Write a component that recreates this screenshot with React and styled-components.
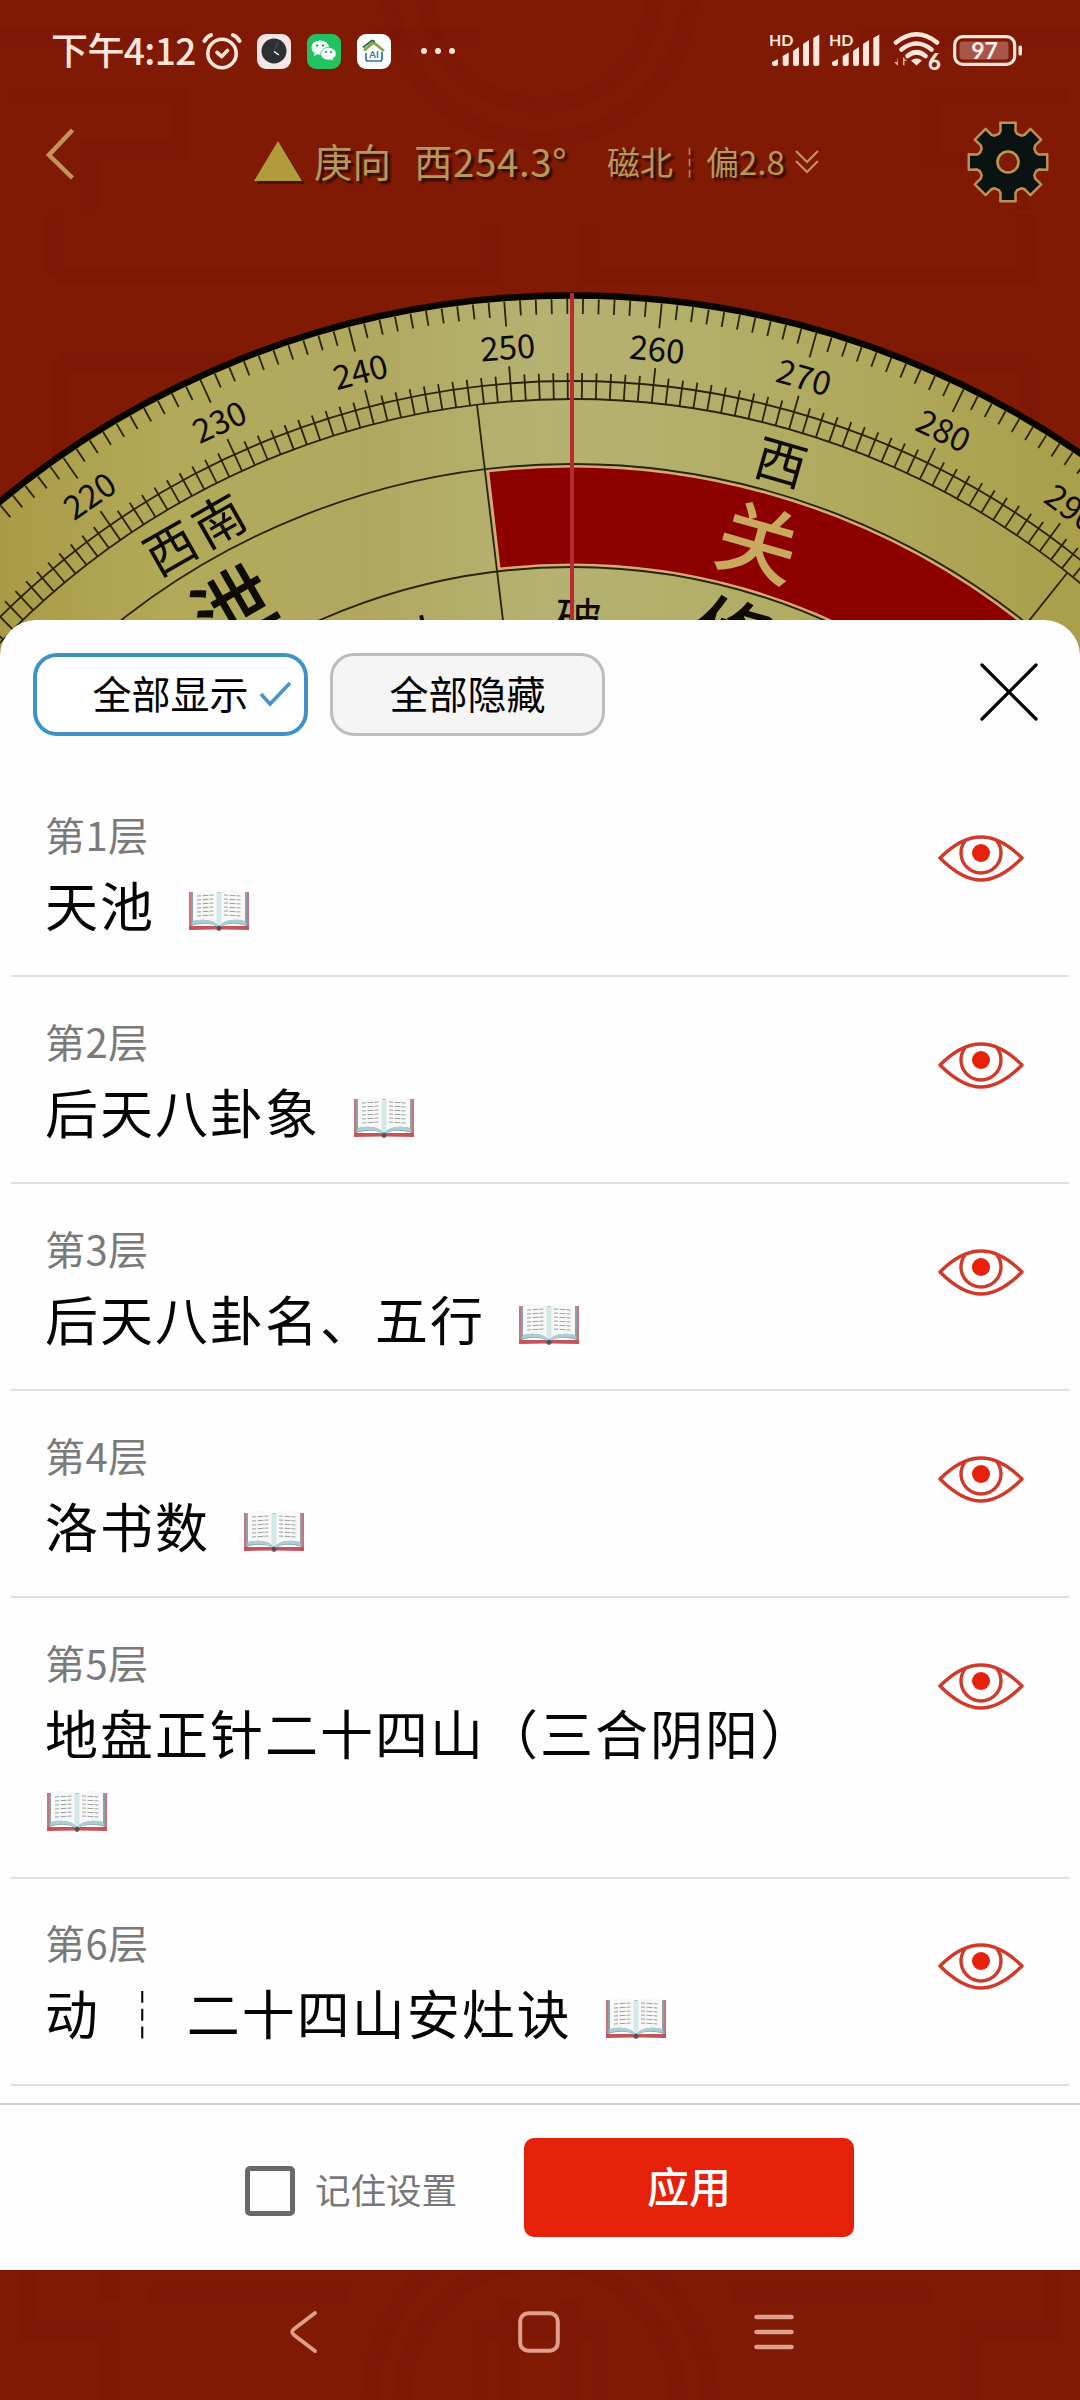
import React from "react";
import styled, { createGlobalStyle, css } from "styled-components";

const cjk = '"Noto Sans CJK SC", "Noto Sans", sans-serif';

const GlobalStyle = createGlobalStyle`
  * { box-sizing: border-box; }
  body { margin: 0; background: #801a04; font-family: ${cjk}; }
  svg { display: block; flex: none; }
`;

const Screen = styled.div`
  position: relative;
  display: flex;
  flex-direction: column;
  width: 1080px;
  height: 2400px;
  overflow: hidden;
  background: #801a04;
`;

const Backdrop = styled.svg`
  position: absolute;
  inset: 0;
`;

/* ---------- status bar ---------- */

const StatusBar = styled.header`
  position: relative;
  display: flex;
  justify-content: space-between;
  height: 102px;
  padding: 0 57px 0 51px;
  color: #ffe6dc;
`;

const StatusGroup = styled.div`
  display: flex;
  align-items: center;
`;

const Clock = styled.span`
  width: 151px;
  padding-bottom: 4px;
  font-size: 37px;
  font-weight: 500;
  line-height: 50px;
  letter-spacing: -0.6px;
  white-space: nowrap;
`;

const AppTile = styled.span`
  display: flex;
  align-items: center;
  justify-content: center;
  width: 34px;
  height: 35px;
  margin-left: 16px;
  border-radius: 9px;
  background: ${(p) => p.$bg};
`;

const MoreDots = styled.span`
  display: flex;
  gap: 8px;
  margin-left: 30px;
  i { width: 6px; height: 6px; border-radius: 50%; background: #ffe6dc; }
`;

/* ---------- compass header ---------- */

const Header = styled.div`
  position: relative;
  display: flex;
  align-items: center;
  height: 120px;
  padding: 0 30px 0 44px;
  color: #b5985a;
  white-space: nowrap;
`;

const BackSlot = styled.div`
  padding-bottom: 16px;
`;

const Readout = styled.div`
  display: flex;
  align-items: center;
  margin-left: 178px;
  text-shadow: 3px 3px 2px rgba(30, 8, 0, 0.85);
`;

const Facing = styled.span`
  width: 100px;
  padding-bottom: 4px;
  font-size: 38.5px;
  line-height: 50px;
`;

const Bearing = styled.span`
  width: 193px;
  padding-bottom: 4px;
  font-size: 38.5px;
  line-height: 50px;
  letter-spacing: 0.6px;
`;

const Declination = styled.span`
  width: 188px;
  padding-bottom: 2px;
  font-size: 33px;
  line-height: 50px;
`;

const HeaderSpacer = styled.div`flex: 1;`;

const DialSlot = styled.div`
  position: relative;
  height: 434px;
`;

/* ---------- sheet ---------- */

const Sheet = styled.section`
  position: relative;
  display: flex;
  flex-direction: column;
  height: 1650px;
  margin-top: -36px;
  border-radius: 36px 36px 0 0;
  background: #fefefe;
`;

const SheetBar = styled.div`
  display: flex;
  align-items: center;
  height: 149px;
  padding: 0 42px 0 33px;
`;

const CloseSlot = styled.div`
  padding-bottom: 6px;
`;

const Toggle = styled.button`
  display: flex;
  align-items: center;
  justify-content: center;
  width: 275px;
  height: 83px;
  margin-right: 22px;
  padding: 0 0 6px;
  border-radius: 24px;
  font-family: inherit;
  font-size: 39px;
  line-height: 50px;
  color: #000;
  ${(p) =>
    p.$active
      ? css`border: 4px solid #3f92c6; background: #fff; svg { margin: 3px -44px 0 9px; }`
      : css`border: 3px solid #bdbdbd; background: #f5f5f5;`}
`;

const LayerList = styled.ul`
  flex: 1;
  margin: 0;
  padding: 1px 11px 0;
  list-style: none;
  overflow: hidden;
`;

const LayerRow = styled.li`
  display: flex;
  justify-content: space-between;
  padding: 38.5px 45px 34px 34px;
  border-bottom: 2px solid #e0e0e0;
`;

const LayerText = styled.div`
  width: 790px;
`;

const LayerIndex = styled.div`
  margin-bottom: 9px;
  font-size: 40px;
  line-height: 50px;
  letter-spacing: 0.4px;
  color: #7a7a7a;
`;

const LayerName = styled.div`
  font-size: 53px;
  line-height: 73.5px;
  letter-spacing: 2px;
  word-spacing: 2px;
  white-space: pre-wrap;
  color: #050505;
`;

const BookSlot = styled.span`
  display: inline-block;
  width: 62px;
  height: 42px;
  margin-left: 1px;
  vertical-align: -4px;
`;

const EyeSlot = styled.div`
  padding-top: 24px;
`;

const Footer = styled.footer`
  display: flex;
  align-items: center;
  height: 167px;
  padding: 0 0 0 245px;
  border-top: 2px solid #d4d4d4;
`;

const Checkbox = styled.span`
  width: 50px;
  height: 50px;
  margin-top: 6px;
  border: 5px solid #696969;
  border-radius: 5px;
`;

const Remember = styled.span`
  width: 209px;
  margin: 3px 0 0 20px;
  font-size: 35.5px;
  line-height: 50px;
  color: #777;
`;

const Apply = styled.button`
  width: 330px;
  height: 99px;
  padding: 0 0 6px;
  border: 0;
  border-radius: 10px;
  background: #e6210a;
  font-family: inherit;
  font-size: 42px;
  font-weight: 500;
  line-height: 90px;
  color: #fff;
`;

const NavBar = styled.nav`
  position: relative;
  display: flex;
  align-items: center;
  flex: 1;
  padding: 0 0 6px 288px;
`;

const NavItem = styled.div`
  width: ${(p) => p.$w}px;
`;

/* ---------- drawings ---------- */

const CX = 572;
const CY = 1192;
const HEADING = 254.3;
const SPREAD = 1.012;

const turn = (deg) => (deg - HEADING) * SPREAD;

const at = (deg, r) => {
  const a = (turn(deg) * Math.PI) / 180;
  return [CX + r * Math.sin(a), CY - r * Math.cos(a)];
};

const Spoke = ({ deg, from, to, w = 1.8 }) => {
  const [x1, y1] = at(deg, from);
  const [x2, y2] = at(deg, to);
  return <line x1={x1} y1={y1} x2={x2} y2={y2} stroke="#2a2405" strokeWidth={w} />;
};

const DialText = ({ deg, r, size, weight = 400, fill = "#0e0b02", spacing = 0, children }) => {
  const [x, y] = at(deg, r);
  return (
    <text
      x={x}
      y={y}
      transform={`rotate(${turn(deg)} ${x} ${y})`}
      textAnchor="middle"
      fontSize={size}
      fontWeight={weight}
      fill={fill}
      letterSpacing={spacing}
      fontFamily={cjk}
    >
      {children}
    </text>
  );
};

const sector = (d1, d2, r1, r2) => {
  const [a, b] = at(d1, r1);
  const [c, d] = at(d2, r1);
  const [e, f] = at(d2, r2);
  const [g, h] = at(d1, r2);
  return `M${a} ${b}A${r1} ${r1} 0 0 1 ${c} ${d}L${e} ${f}A${r2} ${r2} 0 0 0 ${g} ${h}Z`;
};

const degrees = Array.from({ length: 100 }, (_, i) => 205 + i);
const tens = [220, 230, 240, 250, 260, 270, 280, 290];

const Dial = () => (
  <svg width="1080" height="520" viewBox="0 222 1080 520">
    <defs>
      <linearGradient id="brass" gradientUnits="userSpaceOnUse" x1="0" y1="0" x2="1080" y2="0">
        <stop offset="0" stopColor="#a99b46" />
        <stop offset="0.16" stopColor="#b2aa59" />
        <stop offset="0.34" stopColor="#b0a860" />
        <stop offset="0.5" stopColor="#b5b271" />
        <stop offset="0.62" stopColor="#b3b06c" />
        <stop offset="0.8" stopColor="#b0a95c" />
        <stop offset="1" stopColor="#a99f4a" />
      </linearGradient>
    </defs>
    <circle cx={CX} cy={CY} r="896.5" fill="url(#brass)" stroke="#060300" strokeWidth="6.5" />
    {degrees.map((d) => (
      <React.Fragment key={d}>
        <Spoke deg={d} from={893} to={d % 10 ? 878 : 868} />
        <Spoke deg={d} from={793} to={d % 10 ? 819 : 828} />
      </React.Fragment>
    ))}
    {[811, 793, 728, 625].map((r) => (
      <circle key={r} cx={CX} cy={CY} r={r} fill="none" stroke="#2a2405" strokeWidth="1.8" />
    ))}
    <Spoke deg={247.5} from={793} to={560} />
    <Spoke deg={292.5} from={793} to={560} />
    <path d={sector(247.75, 292.25, 725.5, 627.5)} fill="#8c0000" stroke="#dba77b" strokeWidth="2" />
    {tens.map((d) => (
      <DialText key={d} deg={d} r={835} size={33}>{d}</DialText>
    ))}
    <DialText deg={225} r={739} size={51} spacing={5}>西南</DialText>
    <DialText deg={270.1} r={740} size={51}>西</DialText>
    <DialText deg={224.6} r={646} size={79} weight={500}>泄</DialText>
    <DialText deg={270.1} r={645} size={81} weight={500} fill="#c8a95e">关</DialText>
    <DialText deg={239.8} r={556} size={48}>木</DialText>
    <DialText deg={255} r={555} size={47}>破</DialText>
    <DialText deg={270.2} r={548} size={80} weight={500}>修</DialText>
    <rect x="570" y="293" width="4" height="363" fill="#b72c30" />
  </svg>
);

const Pattern = () => (
  <Backdrop width="1080" height="2400" viewBox="0 0 1080 2400">
    <g fill="none" stroke="#760f03" strokeOpacity="0.18" strokeWidth="17">
      <path d="M0 38H190M370 38H480M860 38H1080M8 96H180V150H90V210M1070 96H930V160H1020V210" />
      <path d="M55 276V214M55 276H490V225M590 225V276H1025V214M60 362H250M830 362H1030M1030 362V450M60 362V470" />
      <circle cx="540" cy="-10" r="150" />
      <circle cx="540" cy="-10" r="115" />
      <path d="M28 2270V2330H110V2400M110 2270V2300M1052 2270V2330H970V2400" />
      <path d="M150 2295H350M730 2295H930" />
      <circle cx="540" cy="2400" r="170" />
      <circle cx="540" cy="2400" r="138" />
      <path d="M480 2400V2330H600V2400M510 2300V2400M570 2300V2400" />
    </g>
  </Backdrop>
);

const AlarmIcon = () => (
  <svg width="40" height="38" viewBox="0 0 40 38" fill="none" stroke="#ffe6dc" strokeLinecap="round" strokeLinejoin="round">
    <circle cx="20" cy="21.5" r="14.2" strokeWidth="3.6" />
    <path d="M15 20.5L19.8 24.5L25.5 18.5" strokeWidth="3.6" />
    <path d="M2.500 9Q5 4.500 9 3M37.500 9Q35 4.500 31 3" strokeWidth="4" />
  </svg>
);

const ClockGlyph = () => (
  <svg width="26" height="26" viewBox="0 0 26 26">
    <circle cx="13" cy="13" r="12.500" fill="#2c2f33" />
    <path d="M13 13L17 4" stroke="#565656" strokeWidth="1" />
    <path d="M13 13.500L18 17" stroke="#fff" strokeWidth="1.500" />
  </svg>
);

const WeChatGlyph = () => (
  <svg width="26" height="22" viewBox="0 0 26 22">
    <path d="M9 .5C4 .5 .5 3.800 .5 7.500c0 2.300 1.200 4.200 3 5.500L3 16l3.300-1.700c4 1.200 11.700-.5 11.700-6.800C18 3.800 14 .5 9 .5z" fill="#f2fff5" />
    <path d="M17.500 7.500c-4.300 0-7.700 2.800-7.700 6.300 0 4.700 5 7.200 9.800 5.900L22.500 21.300 22 18.500c1.900-1.200 3.200-2.700 3.200-4.700 0-3.500-3.400-6.300-7.700-6.300z" fill="#fff" stroke="#22c263" strokeWidth=".8" />
    <g fill="#178a45">
      <circle cx="6.200" cy="5.600" r="1.100" /><circle cx="12" cy="5.600" r="1.100" />
      <circle cx="15" cy="12" r="1" /><circle cx="20" cy="12" r="1" />
    </g>
  </svg>
);

const HouseGlyph = () => (
  <svg width="24" height="24" viewBox="0 0 24 24" fill="none">
    <path d="M2 11.500L11.500 3.500L22 12" stroke="#7fa63c" strokeWidth="2.600" />
    <path d="M1 8.500L10 1.500L13 2.500" stroke="#276a55" strokeWidth="1.800" />
    <path d="M4 14V20Q4 22 6 22H18Q20 22 20 20V13" stroke="#2f7897" strokeWidth="1.700" />
    <text x="12" y="19.300" textAnchor="middle" fontSize="9.500" fontWeight="700" fill="#2a7898" fontFamily="Lato, sans-serif">AI</text>
  </svg>
);

const SignalIcon = () => (
  <svg width="51" height="48" viewBox="0 -6 51 48" fill="#ffe6dc">
    <text x="-1" y="12.600" fontSize="16" fontWeight="700" fontFamily="Lato, sans-serif">HD</text>
    <path d="M2 33V29L8 26V31Q8 33 6 33H4Q2 33 2 31zM12.700 31V23L18.700 19.500V31Q18.700 33 16.700 33H14.700Q12.700 33 12.700 31zM23 31V18L29 14V31Q29 33 27 33H25Q23 33 23 31zM33 31V11L39 7V31Q39 33 37 33H35Q33 33 33 31zM43.300 31V5L49.300 1.500V31Q49.300 33 47.300 33H45.300Q43.300 33 43.300 31z" />
  </svg>
);

const WifiIcon = () => (
  <svg width="48" height="52" viewBox="0 -6 48 52">
    <g fill="none" stroke="#ffe6dc" strokeWidth="4.600" strokeLinecap="round">
      <path d="M3 11.500Q23.500 -5 44 11.500" />
      <path d="M8.500 18.500Q23.500 6.500 38.500 18.500" />
      <path d="M14.500 25Q23.500 17.500 32.500 25" />
    </g>
    <path d="M18 29.500Q23.500 25.500 29 29.500L23.500 34.500z" fill="#ffe6dc" />
    <path d="M10 34V26L14 30H11.500V35zM5 26V35L1 31H4z" fill="#e4a594" />
    <text x="35" y="38.500" fontSize="22" fontWeight="900" fill="#ffe6dc" stroke="#801a04" strokeWidth="3" paintOrder="stroke" fontFamily="Lato, sans-serif">6</text>
  </svg>
);

const BatteryIcon = () => (
  <svg width="70" height="32" viewBox="0 0 70 32">
    <rect x="1.700" y="1.700" width="60" height="27.600" rx="8" fill="none" stroke="#ffe6dc" strokeWidth="3.200" />
    <rect x="6.500" y="6.500" width="49" height="18" rx="3" fill="#a8554a" />
    <rect x="65.500" y="10.500" width="3.500" height="10" rx="1.500" fill="#ffe6dc" />
    <text x="31.500" y="23.500" textAnchor="middle" fontSize="23" fontWeight="700" fill="#fff0ea" fontFamily="Lato, sans-serif">97</text>
  </svg>
);

const BackIcon = () => (
  <svg width="32" height="54" viewBox="0 0 32 54" fill="none">
    <path d="M28.500 3L5 28L28.500 51" stroke="#c4935a" strokeWidth="4.500" />
  </svg>
);

const TriangleIcon = () => (
  <svg width="52" height="44" viewBox="0 0 52 44">
    <path d="M27 5L51 44H3z" fill="#3a1000" opacity="0.7" />
    <path d="M24 1L48 41H0z" fill="#b09c3c" />
  </svg>
);

const ChevronsIcon = () => (
  <svg width="24" height="26" viewBox="0 0 24 26" fill="none" stroke="#c4935a" strokeWidth="2.200">
    <path d="M1 2L12 13L23 2M1 12L12 23L23 12" />
  </svg>
);

const gearPoints = Array.from({ length: 8 }, (_, i) =>
  [[-18, 29.5], [-13.5, 32], [-11, 40], [11, 40], [13.5, 32], [18, 29.5]].map(([o, r]) => {
    const a = ((i * 45 + o) * Math.PI) / 180;
    return `${42 + r * Math.sin(a)},${42 - r * Math.cos(a)}`;
  }).join(" ")
).join(" ");

const GearIcon = () => (
  <svg width="84" height="84" viewBox="0 0 84 84">
    <polygon points={gearPoints} fill="#0b1312" stroke="#bd9155" strokeWidth="2.500" strokeLinejoin="round" />
    <circle cx="42" cy="42" r="10.500" fill="#801a04" stroke="#b99a4a" strokeWidth="2.600" />
  </svg>
);

const CheckIcon = () => (
  <svg width="35" height="27" viewBox="0 0 35 27" fill="none">
    <path d="M3 14L12 24L32 3" stroke="#4795cb" strokeWidth="3.600" />
  </svg>
);

const CloseIcon = () => (
  <svg width="58" height="58" viewBox="0 0 58 58">
    <path d="M2 2L56 56M56 2L2 56" stroke="#000" strokeWidth="3.200" strokeLinecap="round" />
  </svg>
);

const EyeIcon = () => (
  <svg width="86" height="50" viewBox="0 0 86 50" fill="none" stroke="#cf3a2a" strokeWidth="3.400" strokeLinejoin="round">
    <path d="M2 25C15 12 28 4 43 4S71 12 84 25C71 38 58 47 43 47S15 38 2 25z" />
    <path d="M27 8A20 20 0 1 0 59 8" />
    <circle cx="43" cy="20" r="9" fill="#e6200a" stroke="none" />
  </svg>
);

const bookLines = [8, 12, 16, 20, 24, 28];

const BookIcon = () => (
  <svg width="62" height="42" viewBox="0 0 62 42">
    <path d="M1 3H5V36L1 40zM61 3H57V36L61 40z" fill="#c9747a" />
    <path d="M1 37L28 37L31 40L34 37L61 37V41L34 40.500Q31 43 28 40.500L1 41z" fill="#c4545a" />
    <path d="M3 3V36.500Q23 32 31 39Q39 32 59 36.500V3z" fill="#8aa3aa" />
    <path d="M5 2Q23 -1 31 4Q39 -1 57 2V32Q39 28 31 37Q23 28 5 32z" fill="#f8f9f7" />
    <path d="M5 32Q23 28 31 37Q39 28 57 32L58.500 35.500Q39 31 31 39Q23 31 3.500 35.500z" fill="#a9ced4" />
    <path d="M28.500 3L31 4.500L33.500 3V33L31 36.500L28.500 33z" fill="#d5e8e9" />
    <path d="M28 38L31 36.500L34 38L31 42z" fill="#3f545c" />
    <g stroke="#9ba1a3" strokeWidth="1" strokeDasharray="4 1.500 6 1">
      {bookLines.map((y) => (
        <path key={y} d={`M9 ${y - 1}L26 ${y - 2}M36 ${y - 2}L53 ${y - 1}`} />
      ))}
    </g>
  </svg>
);

const NavBack = () => (
  <svg width="30" height="44" viewBox="0 0 30 44" fill="none">
    <path d="M27 3L6 19Q2.500 22 6 25L27 41" stroke="#dea08c" strokeWidth="3.800" strokeLinecap="round" />
  </svg>
);

const NavHome = () => (
  <svg width="42" height="42" viewBox="0 0 42 42">
    <rect x="2.200" y="2.200" width="37.600" height="37.600" rx="8" fill="none" stroke="#dea08c" strokeWidth="4" />
  </svg>
);

const NavMenu = () => (
  <svg width="40" height="38" viewBox="0 0 40 38">
    <path d="M2.500 4H37.500M2.500 19H37.500M2.500 34H37.500" stroke="#dea08c" strokeWidth="4.600" strokeLinecap="round" />
  </svg>
);

const layers = [
  "天池",
  "后天八卦象",
  "后天八卦名、五行",
  "洛书数",
  "地盘正针二十四山（三合阴阳）",
  "动 ┆ 二十四山安灶诀",
];

const SignalPair = styled.div`
  display: flex;
  gap: 9px;
  margin-right: 12px;
`;

const BatterySlot = styled.div`margin-left: 12px;`;
const AlarmSlot = styled.div`margin-right: -1px;`;
const TriangleSlot = styled.div`margin-right: 8px;`;

export default function App() {
  return (
    <Screen>
      <GlobalStyle />
      <Pattern />
      <StatusBar>
        <StatusGroup>
          <Clock>下午4:12</Clock>
          <AlarmSlot><AlarmIcon /></AlarmSlot>
          <AppTile $bg="#f6e6e6"><ClockGlyph /></AppTile>
          <AppTile $bg="#22c263"><WeChatGlyph /></AppTile>
          <AppTile $bg="#fdfffe"><HouseGlyph /></AppTile>
          <MoreDots><i /><i /><i /></MoreDots>
        </StatusGroup>
        <StatusGroup>
          <SignalPair><SignalIcon /><SignalIcon /></SignalPair>
          <WifiIcon />
          <BatterySlot><BatteryIcon /></BatterySlot>
        </StatusGroup>
      </StatusBar>
      <Header>
        <BackSlot><BackIcon /></BackSlot>
        <Readout>
          <TriangleSlot><TriangleIcon /></TriangleSlot>
          <Facing>庚向</Facing>
          <Bearing>西254.3°</Bearing>
          <Declination>磁北┆偏2.8</Declination>
          <ChevronsIcon />
        </Readout>
        <HeaderSpacer />
        <GearIcon />
      </Header>
      <DialSlot><Dial /></DialSlot>
      <Sheet>
        <SheetBar>
          <Toggle $active>全部显示<CheckIcon /></Toggle>
          <Toggle>全部隐藏</Toggle>
          <HeaderSpacer />
          <CloseSlot><CloseIcon /></CloseSlot>
        </SheetBar>
        <LayerList>
          {layers.map((name, i) => (
            <LayerRow key={name}>
              <LayerText>
                <LayerIndex>第{i + 1}层</LayerIndex>
                <LayerName>
                  {name}{"  "}
                  <BookSlot><BookIcon /></BookSlot>
                </LayerName>
              </LayerText>
              <EyeSlot><EyeIcon /></EyeSlot>
            </LayerRow>
          ))}
        </LayerList>
        <Footer>
          <Checkbox />
          <Remember>记住设置</Remember>
          <Apply>应用</Apply>
        </Footer>
      </Sheet>
      <NavBar>
        <NavItem $w={230}><NavBack /></NavItem>
        <NavItem $w={236}><NavHome /></NavItem>
        <NavItem $w={40}><NavMenu /></NavItem>
      </NavBar>
    </Screen>
  );
}
